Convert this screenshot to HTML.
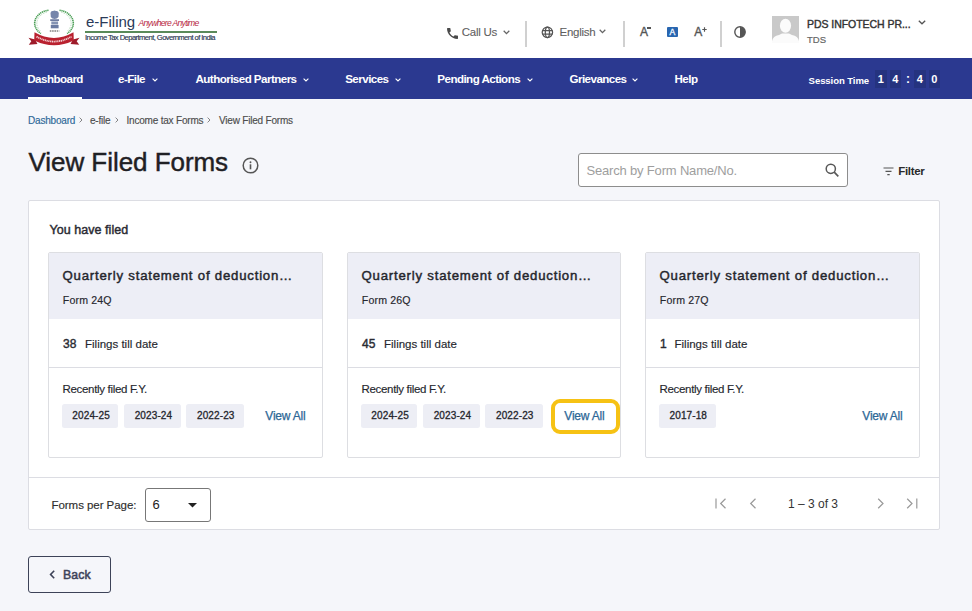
<!DOCTYPE html>
<html><head><meta charset="utf-8">
<style>
*{margin:0;padding:0;box-sizing:border-box}
html,body{width:972px;height:611px;overflow:hidden;background:#f5f6fa;font-family:"Liberation Sans",sans-serif;position:relative}
.a{position:absolute;white-space:nowrap;line-height:1}
#hdr{position:absolute;left:0;top:0;width:972px;height:58px;background:#fff}
#nav{position:absolute;left:0;top:58px;width:972px;height:41px;background:#2b3990}
.nv{position:absolute;color:#fff;font-weight:bold;font-size:11.6px;margin-top:0.4px;line-height:1;white-space:nowrap;letter-spacing:-0.55px}
.chev{position:absolute}
.dig{position:absolute;top:70.5px;width:11.5px;height:17.5px;background:#25337f;color:#fff;font-weight:bold;font-size:11px;line-height:19.5px;text-align:center}
.vd{position:absolute;top:21px;width:2px;height:26px;background:#d0d0d0}

.bc{position:absolute;top:115.5px;font-size:10px;line-height:1;color:#4d4d4d;white-space:nowrap;letter-spacing:-0.2px;-webkit-text-stroke:0.15px #4d4d4d}
.gt{position:absolute;top:117px;width:4px;height:6px}
#box{position:absolute;left:28px;top:200px;width:912px;height:330px;background:#fff;border:1px solid #dcdde3;border-radius:2px}
.card{position:absolute;top:252px;width:275px;height:206px;background:#fff;border:1px solid #dddee2;border-radius:2px;overflow:hidden}
.ch{position:absolute;left:0;top:0;width:100%;height:66px;background:#edeef6}
.ct{position:absolute;left:13.5px;top:16.2px;font-size:13.2px;color:#25262d;line-height:1;white-space:nowrap;letter-spacing:0.79px;-webkit-text-stroke:0.45px #25262d}
.cf{position:absolute;left:13.8px;top:41.8px;font-size:10.6px;color:#26272e;line-height:1;white-space:nowrap;letter-spacing:0.15px;-webkit-text-stroke:0.15px #26272e}
.cn{position:absolute;left:14px;top:85px;font-size:12px;color:#2a2b33;line-height:1;-webkit-text-stroke:0.4px #2a2b33}
.cl{position:absolute;top:86px;font-size:11.5px;color:#26272e;line-height:1;white-space:nowrap;-webkit-text-stroke:0.15px #26272e}
.hr{position:absolute;left:0;top:114px;width:100%;height:1px;background:#dcdde3}
.rf{position:absolute;left:13.5px;top:130.8px;font-size:11.5px;color:#26272e;line-height:1;white-space:nowrap;letter-spacing:-0.32px;-webkit-text-stroke:0.15px #26272e}
.chip{position:absolute;top:151px;height:24px;background:#edeef5;border-radius:2.5px;font-size:10px;color:#25262d;line-height:23px;text-align:center;letter-spacing:0.12px;padding-left:1.5px;-webkit-text-stroke:0.3px #25262d}
.va{position:absolute;top:157px;font-size:12px;color:#2c6796;line-height:1;white-space:nowrap;letter-spacing:-0.2px;-webkit-text-stroke:0.25px #2c6796}
</style></head><body>
<div id="hdr">
  <!-- emblem -->
  <svg class="a" style="left:25px;top:5px" width="60" height="45" viewBox="25 5 60 45">
    <path d="M48.5 10.2 A16.8 13.2 0 0 0 41 33.5" fill="none" stroke="#4a9e55" stroke-width="1.6" stroke-dasharray="1.3 0.6"/>
    <path d="M59.5 10.2 A16.8 13.2 0 0 1 67 33.5" fill="none" stroke="#4a9e55" stroke-width="1.6" stroke-dasharray="1.3 0.6"/>
    <path d="M47 12 A15.5 12 0 0 0 40.5 31" fill="none" stroke="#8cc490" stroke-width="0.8" stroke-dasharray="0.8 1"/>
    <path d="M61 12 A15.5 12 0 0 1 67.5 31" fill="none" stroke="#8cc490" stroke-width="0.8" stroke-dasharray="0.8 1"/>
    <path d="M50.5 13 Q51 10.5 53 11 Q54.5 9.8 56 11 Q58 10.5 58.8 13 L58.5 17 Q57 19 54.6 19 Q52 19 50.8 17Z" fill="#7585aa"/>
    <path d="M50.2 19.3 h8.8 v1.6 h-8.8z" fill="#5f6f98"/>
    <path d="M51.3 21.5 h6.8 v3 h-6.8z" fill="#8593b3"/>
    <path d="M50.8 25 h7.8 v3.3 h-7.8z" fill="#6b7ba2"/>
    <path d="M49.8 31 h9.5" stroke="#444" stroke-width="1.1" stroke-dasharray="1.6 0.7"/>
    <path d="M35 39.5 L28.5 37.8 L31.3 41.3 L28.8 44.8 L37.5 44Z" fill="#9d1b2a"/>
    <path d="M73 39.5 L79.5 37.8 L76.7 41.3 L79.2 44.8 L70.5 44Z" fill="#9d1b2a"/>
    <path d="M34.5 32.3 Q54 43.5 73.5 32.3 L73.8 40.5 Q54 50 34.2 40.5 Z" fill="#b9212f"/>
    <path d="M36.5 36.6 Q54 46.5 71.5 36.6" stroke="#f3d3d6" stroke-width="1.8" fill="none" stroke-dasharray="1.2 0.6"/>
  </svg>
  <div class="a" style="left:86px;top:14.2px;font-size:15px;color:#2a3a58">e-Filing</div>
  <div class="a" style="left:138.5px;top:19px;font-size:8.6px;color:#b8283f;font-style:italic;letter-spacing:-0.7px">Anywhere Anytime</div>
  <div style="position:absolute;left:85px;top:31px;width:132px;height:2px;background:#5a8a5a"></div>
  <div class="a" style="left:85px;top:34px;font-size:7.6px;color:#2a3550;letter-spacing:-0.56px;-webkit-text-stroke:0.15px #2a3550">Income Tax Department, Government of India</div>

  <!-- call us -->
  <svg class="a" style="left:446.5px;top:27.6px" width="11" height="11" viewBox="3 3 18 18"><path fill="#4a4a4a" d="M20.01 15.38c-1.23 0-2.42-.2-3.53-.56-.35-.12-.74-.03-1.01.24l-1.57 1.97c-2.83-1.350-5.48-3.9-6.89-6.830l1.950-1.660c.27-.28.35-.67.24-1.020-.37-1.110-.56-2.3-.56-3.530 0-.54-.45-.99-.99-.99H4.19C3.65 3 3 3.24 3 3.99 3 13.28 10.73 21 20.01 21c.71 0 .99-.63.99-1.180v-3.450c0-.54-.45-.99-.99-.99z"/></svg>
  <div class="a" style="left:461.8px;top:27px;font-size:11.5px;color:#5f5f5f;letter-spacing:-0.25px;-webkit-text-stroke:0.1px #5f5f5f">Call Us</div>
  <svg class="chev" style="left:502.5px;top:30px" width="7" height="5" viewBox="0 0 7 5"><path d="M0.7 0.8 L3.5 3.6 L6.3 0.8" stroke="#666" stroke-width="1.3" fill="none"/></svg>
  <div class="vd" style="left:525px"></div>
  <!-- globe -->
  <svg class="a" style="left:541px;top:25.5px" width="13" height="13" viewBox="0 0 13 13"><g fill="none" stroke="#555" stroke-width="1.25"><circle cx="6.4" cy="6.3" r="5.2"/><ellipse cx="6.4" cy="6.3" rx="2.1" ry="5.2"/><path d="M1.2 4.6h10.4M1.2 8h10.4"/></g></svg>
  <div class="a" style="left:559.5px;top:27px;font-size:11.5px;color:#5f5f5f;letter-spacing:-0.25px;-webkit-text-stroke:0.1px #5f5f5f">English</div>
  <svg class="chev" style="left:599.2px;top:29.3px" width="7" height="5" viewBox="0 0 7 5"><path d="M0.7 0.8 L3.5 3.6 L6.3 0.8" stroke="#666" stroke-width="1.3" fill="none"/></svg>
  <div class="vd" style="left:623px"></div>
  <!-- A- A A+ -->
  <div class="a" style="left:640px;top:26.2px;font-size:12px;color:#555;-webkit-text-stroke:0.35px #555;letter-spacing:0">A</div>
  <div style="position:absolute;left:647.2px;top:27.3px;width:3.8px;height:1.6px;background:#555"></div>
  <div style="position:absolute;left:667px;top:26.5px;width:11px;height:10.5px;background:#2866b0;border-radius:1px"></div>
  <div class="a" style="left:669.6px;top:27.8px;font-size:8.6px;color:#eef6ff;-webkit-text-stroke:0.35px #eef6ff">A</div>
  <div class="a" style="left:694.2px;top:26.2px;font-size:12px;color:#555;-webkit-text-stroke:0.35px #555">A</div>
  <svg class="a" style="left:701.5px;top:26.5px" width="5" height="5" viewBox="0 0 5 5"><path d="M2.5 0.3v4.4M0.3 2.5h4.4" stroke="#555" stroke-width="1.15"/></svg>
  <div class="vd" style="left:720px"></div>
  <svg class="a" style="left:734px;top:26px" width="12" height="12" viewBox="0 0 12 12"><circle cx="6" cy="6" r="5.2" fill="none" stroke="#555" stroke-width="1.4"/><path d="M6 0.8 A5.2 5.2 0 0 1 6 11.2Z" fill="#555"/></svg>
  <!-- avatar -->
  <svg class="a" style="left:772px;top:16px" width="27" height="27" viewBox="0 0 27 27"><rect width="27" height="27" fill="#c9c9c9"/><ellipse cx="13.5" cy="9.8" rx="5.6" ry="7" fill="#fbfbfb"/><path d="M0 27 L0 25 Q1 20 7 19 L10 17.5 L17 17.5 L20 19 Q26 20 27 25 L27 27Z" fill="#fbfbfb"/></svg>
  <div class="a" style="left:807px;top:19px;font-size:10.5px;color:#333;letter-spacing:-0.05px;-webkit-text-stroke:0.4px #333">PDS INFOTECH PR...</div>
  <svg class="chev" style="left:917.5px;top:19.5px" width="8" height="5" viewBox="0 0 8 5"><path d="M0.8 0.8 L4 3.8 L7.2 0.8" stroke="#555" stroke-width="1.3" fill="none"/></svg>
  <div class="a" style="left:807px;top:34.5px;font-size:9.5px;color:#666;-webkit-text-stroke:0.2px #666">TDS</div>
</div>

<div id="nav">
  <div class="nv" style="left:27.3px;top:14.5px">Dashboard</div>
  <div style="position:absolute;left:28px;top:39px;width:54px;height:2px;background:#fff"></div>
  <div class="nv" style="left:118px;top:15px">e-File</div>
  <div class="nv" style="left:195.5px;top:15px">Authorised Partners</div>
  <div class="nv" style="left:345.2px;top:15px">Services</div>
  <div class="nv" style="left:437.3px;top:15px">Pending Actions</div>
  <div class="nv" style="left:569.5px;top:15px">Grievances</div>
<svg class="chev" style="left:152px;top:20px" width="6" height="4" viewBox="0 0 6 4"><path d="M0.6 0.6 L3 3 L5.4 0.6" stroke="#fff" stroke-width="1.1" fill="none"/></svg><svg class="chev" style="left:302.5px;top:20px" width="6" height="4" viewBox="0 0 6 4"><path d="M0.6 0.6 L3 3 L5.4 0.6" stroke="#fff" stroke-width="1.1" fill="none"/></svg><svg class="chev" style="left:395px;top:20px" width="6" height="4" viewBox="0 0 6 4"><path d="M0.6 0.6 L3 3 L5.4 0.6" stroke="#fff" stroke-width="1.1" fill="none"/></svg><svg class="chev" style="left:526.5px;top:20px" width="6" height="4" viewBox="0 0 6 4"><path d="M0.6 0.6 L3 3 L5.4 0.6" stroke="#fff" stroke-width="1.1" fill="none"/></svg><svg class="chev" style="left:632px;top:20px" width="6" height="4" viewBox="0 0 6 4"><path d="M0.6 0.6 L3 3 L5.4 0.6" stroke="#fff" stroke-width="1.1" fill="none"/></svg>
  <div class="nv" style="left:674.5px;top:14.5px">Help</div>
  <div class="nv" style="left:808.6px;top:17.5px;font-size:9.6px;letter-spacing:-0.1px">Session Time</div>
  <div class="dig" style="left:875px;top:12.2px">1</div>
  <div class="dig" style="left:889.5px;top:12.2px">4</div>
  <div class="nv" style="left:906px;top:15px;font-size:12px">:</div>
  <div class="dig" style="left:914px;top:12.2px">4</div>
  <div class="dig" style="left:928.5px;top:12.2px">0</div>
</div>


<div class="bc" style="left:28px;color:#2c6898;-webkit-text-stroke:0.15px #2c6898">Dashboard</div><svg class="gt" style="left:78.5px" width="4" height="6" viewBox="0 0 4 6"><path d="M0.6 0.6 L3 3 L0.6 5.4" stroke="#777" stroke-width="0.9" fill="none"/></svg>
<div class="bc" style="left:90px">e-file</div><svg class="gt" style="left:114.5px" width="4" height="6" viewBox="0 0 4 6"><path d="M0.6 0.6 L3 3 L0.6 5.4" stroke="#777" stroke-width="0.9" fill="none"/></svg>
<div class="bc" style="left:126.5px">Income tax Forms</div><svg class="gt" style="left:206.5px" width="4" height="6" viewBox="0 0 4 6"><path d="M0.6 0.6 L3 3 L0.6 5.4" stroke="#777" stroke-width="0.9" fill="none"/></svg>
<div class="bc" style="left:219px">View Filed Forms</div>
<div class="a" style="left:28.5px;top:149px;font-size:26px;color:#1f2024;letter-spacing:-0.05px;-webkit-text-stroke:0.45px #1f2024">View Filed Forms</div>
<svg class="a" style="left:242px;top:157px" width="17" height="17" viewBox="0 0 17 17"><circle cx="8.5" cy="8.5" r="7.3" fill="none" stroke="#555" stroke-width="1.5"/><rect x="7.7" y="7.3" width="1.6" height="5" fill="#555"/><circle cx="8.5" cy="5.2" r="0.95" fill="#555"/></svg>
<div style="position:absolute;left:578px;top:153px;width:270px;height:34px;background:#fff;border:1px solid #8d8d8d;border-radius:3px"></div>
<div class="a" style="left:586.5px;top:163.5px;font-size:13px;color:#9e9e9e;letter-spacing:-0.18px">Search by Form Name/No.</div>
<svg class="a" style="left:825px;top:163px" width="15" height="15" viewBox="0 0 15 15"><circle cx="5.8" cy="5.8" r="4.6" fill="none" stroke="#585858" stroke-width="1.5"/><path d="M9.2 9.2 L13.3 13.3" stroke="#585858" stroke-width="1.7"/></svg>
<svg class="a" style="left:882.5px;top:166.5px" width="11" height="9" viewBox="0 0 11 9"><path d="M0.5 1h10M2.5 4.3h6M4.3 7.6h2.4" stroke="#555" stroke-width="1.2"/></svg>
<div class="a" style="left:898.3px;top:165.5px;font-size:11.5px;color:#2a2a2a;font-weight:bold;letter-spacing:-0.35px">Filter</div>
<div id="box"></div>
<div class="a" style="left:49.5px;top:223.5px;font-size:12.5px;color:#2a2b33;letter-spacing:0.05px;-webkit-text-stroke:0.45px #2a2b33">You have filed</div>
<div class="card" style="left:48px"><div class="ch"></div><div class="ct">Quarterly statement of deduction…</div><div class="cf">Form 24Q</div><div class="cn">38</div><div class="cl" style="left:36px">Filings till date</div><div class="hr"></div><div class="rf">Recently filed F.Y.</div><div class="chip" style="left:13.3px;width:56.2px">2024-25</div><div class="chip" style="left:75.2px;width:57px">2023-24</div><div class="chip" style="left:137.2px;width:57.6px">2022-23</div><div class="va" style="left:216.3px">View All</div></div>
<div class="card" style="left:347px;width:274px"><div class="ch"></div><div class="ct">Quarterly statement of deduction…</div><div class="cf">Form 26Q</div><div class="cn">45</div><div class="cl" style="left:36px">Filings till date</div><div class="hr"></div><div class="rf">Recently filed F.Y.</div><div class="chip" style="left:13.3px;width:56.2px">2024-25</div><div class="chip" style="left:75.2px;width:57px">2023-24</div><div class="chip" style="left:137.2px;width:57.6px">2022-23</div><div class="va" style="left:216.3px">View All</div></div>
<div class="card" style="left:645px"><div class="ch"></div><div class="ct">Quarterly statement of deduction…</div><div class="cf">Form 27Q</div><div class="cn">1</div><div class="cl" style="left:28.5px">Filings till date</div><div class="hr"></div><div class="rf">Recently filed F.Y.</div><div class="chip" style="left:13.3px;width:56.5px">2017-18</div><div class="va" style="left:216.3px">View All</div></div>
<div style="position:absolute;left:551px;top:399px;width:69px;height:34.5px;border:4.8px solid #f6c214;border-radius:9px"></div>
<div style="position:absolute;left:29px;top:477px;width:910px;height:1px;background:#dcdde3"></div>
<div class="a" style="left:51.5px;top:499.6px;font-size:11.5px;color:#2e2e2e;letter-spacing:-0.05px;-webkit-text-stroke:0.15px #2e2e2e">Forms per Page:</div>
<div style="position:absolute;left:144.5px;top:488px;width:66px;height:33.5px;background:#fff;border:1px solid #777;border-radius:3px"></div>
<div class="a" style="left:152.5px;top:498px;font-size:13px;color:#222">6</div>
<svg class="a" style="left:187.5px;top:503px" width="9" height="5" viewBox="0 0 9 5"><path d="M0 0h9L4.5 4.5z" fill="#222"/></svg>
<svg class="a" style="left:715px;top:498px" width="12" height="11" viewBox="0 0 12 11"><path d="M1 0.5v10M10.5 0.8L5.7 5.5l4.8 4.7" stroke="#999" stroke-width="1.2" fill="none"/></svg>
<svg class="a" style="left:748.5px;top:498px" width="8" height="11" viewBox="0 0 8 11"><path d="M6.5 0.8L1.7 5.5l4.8 4.7" stroke="#999" stroke-width="1.2" fill="none"/></svg>
<div class="a" style="left:788px;top:498px;font-size:12px;color:#333;letter-spacing:0px">1 – 3 of 3</div>
<svg class="a" style="left:877px;top:498px" width="8" height="11" viewBox="0 0 8 11"><path d="M1.2 0.8L6 5.5l-4.8 4.7" stroke="#999" stroke-width="1.2" fill="none"/></svg>
<svg class="a" style="left:906px;top:498px" width="12" height="11" viewBox="0 0 12 11"><path d="M1.2 0.8L6 5.5l-4.8 4.7M10.8 0.5v10" stroke="#999" stroke-width="1.2" fill="none"/></svg>
<div style="position:absolute;left:28px;top:556px;width:83px;height:37px;border:1.5px solid #3d4358;border-radius:3px"></div>
<svg class="a" style="left:48.5px;top:570px" width="7" height="9" viewBox="0 0 7 9"><path d="M5.2 0.8L1.6 4.5l3.6 3.7" stroke="#3d4358" stroke-width="1.6" fill="none"/></svg>
<div class="a" style="left:63px;top:569px;font-size:12.3px;color:#3d4358;letter-spacing:0.1px;-webkit-text-stroke:0.5px #3d4358">Back</div>
</body></html>
